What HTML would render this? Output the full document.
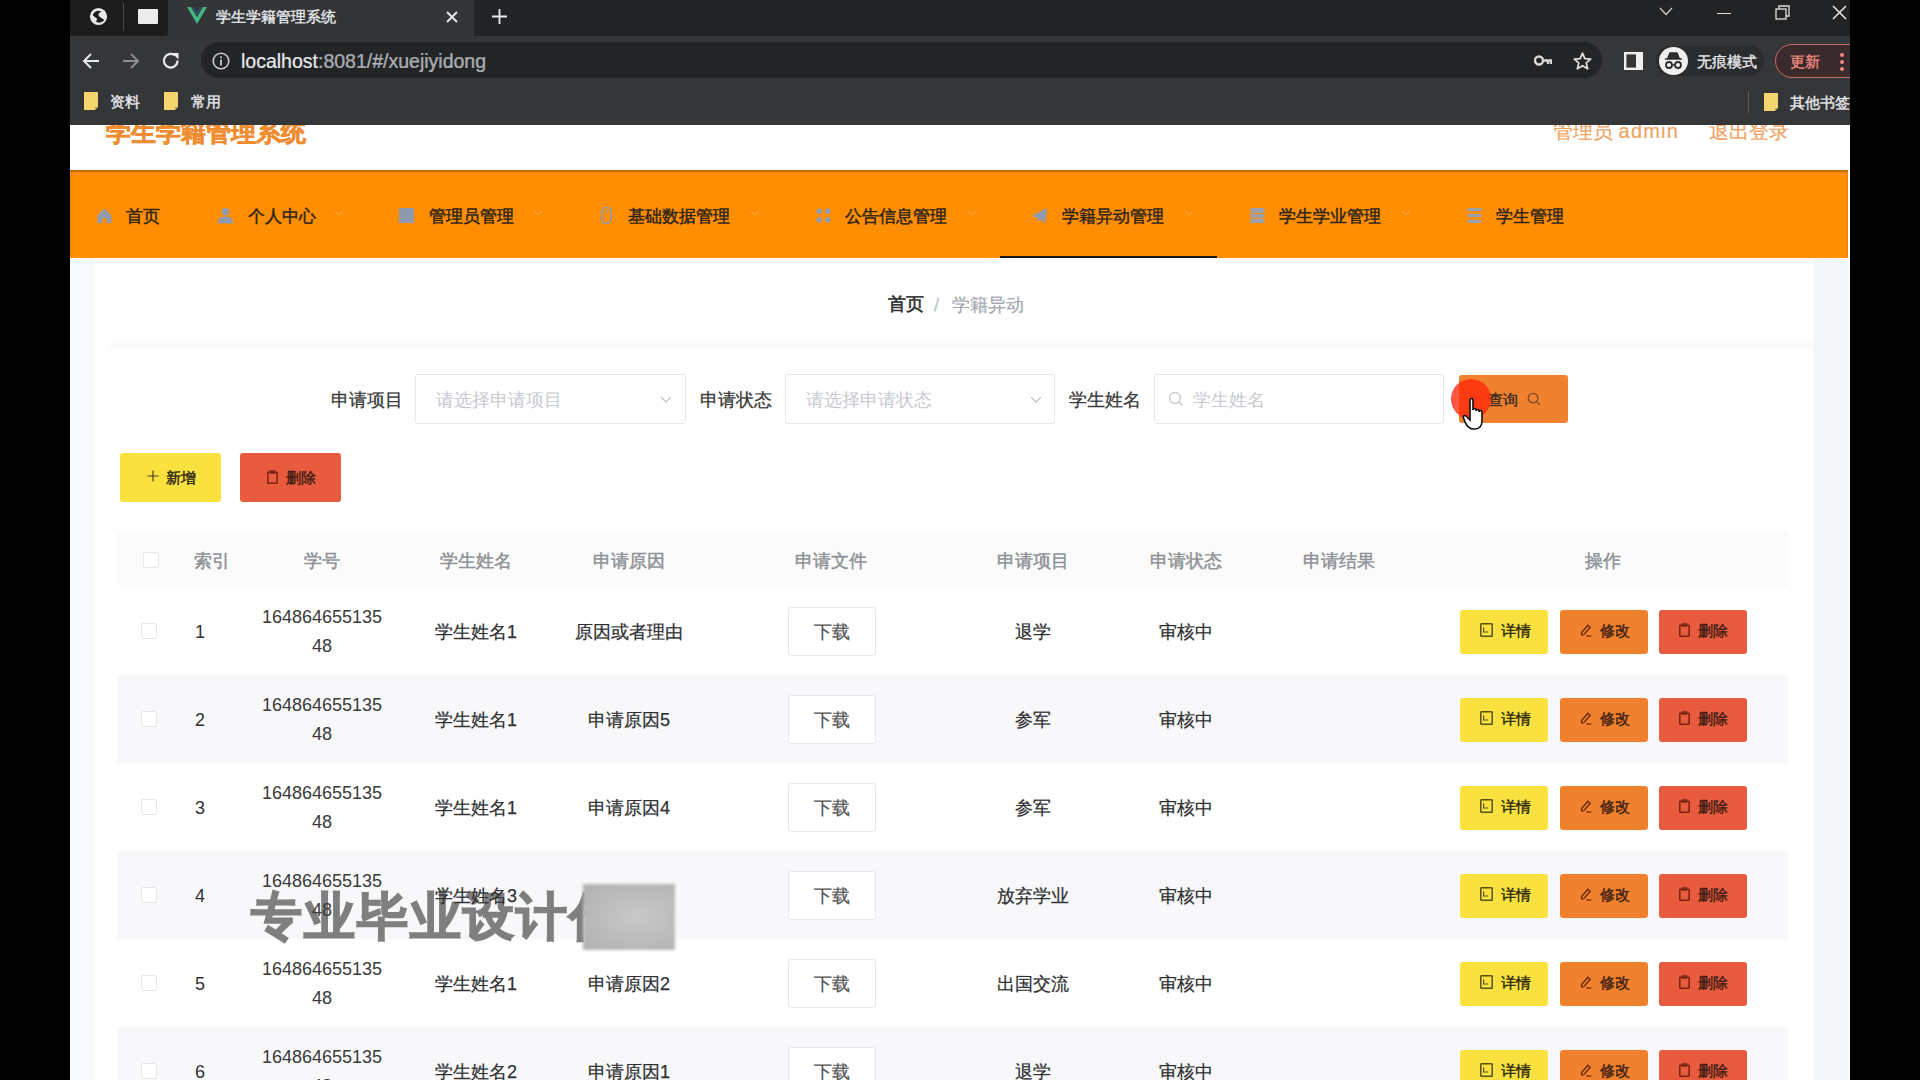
<!DOCTYPE html>
<html><head><meta charset="utf-8">
<style>
*{margin:0;padding:0;box-sizing:border-box}
html,body{width:1920px;height:1080px;overflow:hidden;background:#000;font-family:"Liberation Sans",sans-serif}
.a{position:absolute}
.t{position:absolute;white-space:nowrap;line-height:1}
.c{text-align:center}
.nav{font-size:17.45px;color:#2e2418;-webkit-text-stroke:0.45px #2e2418}
</style></head><body>
<!-- browser window -->
<div class="a" style="left:70px;top:0;width:1780px;height:36px;background:#222325"></div>
<div class="a" style="left:70px;top:36px;width:1780px;height:89px;background:#353638"></div>
<div class="a" style="left:70px;top:0;width:98px;height:35px;background:#1c1c1d;border-radius:0 0 6px 0"></div>
<svg class="a" style="left:89px;top:7px" width="19" height="19" viewBox="0 0 20 20"><circle cx="10" cy="10" r="9" fill="#e8e8e8"/><path d="M4 8 C6 4 10 3 13 5 C10 6 9 8 11 10 C13 12 15 12 16 14 C13 17 9 17 7 15 C9 14 9 12 7 11 C5 10 4 9 4 8Z" fill="#1c1c1d"/></svg>
<div class="a" style="left:123px;top:3px;width:1px;height:27px;background:#4a4a4a"></div>
<div class="a" style="left:138px;top:9px;width:20px;height:15px;background:#ececec;border-radius:1px"></div>
<div class="a" style="left:168px;top:0;width:306px;height:36px;background:#333537"></div>
<svg class="a" style="left:187px;top:7px" width="20" height="18" viewBox="0 0 20 18"><path d="M0 0 H4 L10 10 L16 0 H20 L10 17Z" fill="#41b883"/><path d="M4 0 H7.5 L10 4.5 L12.5 0 H16 L10 10Z" fill="#34495e"/></svg>
<div class="t" style="left:216px;top:9px;font-size:15px;color:#e8eaed;-webkit-text-stroke:0.35px #e8eaed">学生学籍管理系统</div>
<svg class="a" style="left:446px;top:11px" width="12" height="12" viewBox="0 0 12 12"><path d="M1 1L11 11M11 1L1 11" stroke="#e8eaed" stroke-width="1.8"/></svg>
<svg class="a" style="left:492px;top:9px" width="15" height="15" viewBox="0 0 15 15"><path d="M7.5 0V15M0 7.5H15" stroke="#e8eaed" stroke-width="1.8"/></svg>
<!-- window controls -->
<svg class="a" style="left:1659px;top:7px" width="14" height="9" viewBox="0 0 14 9"><path d="M1 1L7 7.5L13 1" fill="none" stroke="#cfcfcf" stroke-width="1.2"/></svg>
<div class="a" style="left:1717px;top:13px;width:14px;height:1px;background:#e0e0e0"></div>
<svg class="a" style="left:1775px;top:5px" width="15" height="15" viewBox="0 0 15 15"><rect x="1" y="4" width="10" height="10" fill="none" stroke="#e0e0e0" stroke-width="1.3"/><path d="M4 4V1H14V11H11" fill="none" stroke="#e0e0e0" stroke-width="1.3"/></svg>
<svg class="a" style="left:1832px;top:5px" width="15" height="15" viewBox="0 0 15 15"><path d="M1 1L14 14M14 1L1 14" stroke="#e8e8e8" stroke-width="1.5"/></svg>
<!-- toolbar -->
<svg class="a" style="left:81px;top:51px" width="20" height="20" viewBox="0 0 20 20"><path d="M18 10H3M10 3L3 10L10 17" fill="none" stroke="#e8eaed" stroke-width="2"/></svg>
<svg class="a" style="left:121px;top:51px" width="20" height="20" viewBox="0 0 20 20"><path d="M2 10H17M10 3L17 10L10 17" fill="none" stroke="#8a8c90" stroke-width="2"/></svg>
<svg class="a" style="left:161px;top:51px" width="20" height="20" viewBox="0 0 20 20"><path d="M16.5 9.5A6.8 6.8 0 1 1 14 4.5" fill="none" stroke="#e8eaed" stroke-width="2.2"/><path d="M11 2H17.5V8.5Z" fill="#e8eaed"/></svg>
<div class="a" style="left:201px;top:42px;width:1401px;height:36px;background:#232426;border-radius:18px"></div>
<svg class="a" style="left:212px;top:52px" width="18" height="18" viewBox="0 0 18 18"><circle cx="9" cy="9" r="7.8" fill="none" stroke="#c8cacd" stroke-width="1.6"/><rect x="8.1" y="7.5" width="1.8" height="6" fill="#c8cacd"/><rect x="8.1" y="4.3" width="1.8" height="1.9" fill="#c8cacd"/></svg>
<div class="t" style="left:241px;top:52px;font-size:19.5px;color:#e8eaed;-webkit-text-stroke:0.2px #e8eaed">localhost<span style="color:#a0a3a8">:8081/#/xuejiyidong</span></div>
<svg class="a" style="left:1534px;top:55px" width="18" height="11" viewBox="0 0 18 11"><circle cx="5" cy="5.5" r="4" fill="none" stroke="#d8d8d8" stroke-width="2.4"/><path d="M9 5.5H17V9M14 5.5V9" fill="none" stroke="#d8d8d8" stroke-width="2.4"/></svg>
<svg class="a" style="left:1573px;top:52px" width="19" height="18" viewBox="0 0 24 23"><path d="M12 1.5L15 8.5L22.5 9L16.8 14L18.6 21.5L12 17.5L5.4 21.5L7.2 14L1.5 9L9 8.5Z" fill="none" stroke="#e0e0e0" stroke-width="2.2" stroke-linejoin="round"/></svg>
<svg class="a" style="left:1624px;top:52px" width="19" height="18" viewBox="0 0 19 18"><rect x="1.2" y="1.2" width="16.6" height="15.6" fill="none" stroke="#f0f0f0" stroke-width="2.4"/><rect x="12" y="1" width="6" height="16" fill="#f0f0f0"/></svg>
<div class="a" style="left:1656px;top:46px;width:108px;height:30px;background:#2b2c2e;border-radius:15px"></div>
<div class="a" style="left:1659px;top:47px;width:29px;height:28px;background:#f0f0f0;border-radius:50%"></div>
<svg class="a" style="left:1663px;top:51px" width="21" height="20" viewBox="0 0 21 20"><path d="M2 8H19 M5 7L7 2H14L16 7Z" fill="#2b2c2e" stroke="#2b2c2e" stroke-width="1.5"/><circle cx="6" cy="14" r="3" fill="none" stroke="#2b2c2e" stroke-width="1.8"/><circle cx="15" cy="14" r="3" fill="none" stroke="#2b2c2e" stroke-width="1.8"/><path d="M9 14H12" stroke="#2b2c2e" stroke-width="1.5"/></svg>
<div class="t" style="left:1697px;top:54px;font-size:15px;color:#e8eaed;-webkit-text-stroke:0.35px #e8eaed">无痕模式</div>
<div class="a" style="left:1775px;top:44px;width:110px;height:34px;background:#3a2a2c;border:1.5px solid #c86a6a;border-radius:17px"></div>
<div class="t" style="left:1790px;top:54px;font-size:15px;color:#f28b82;-webkit-text-stroke:0.3px #f28b82">更新</div>
<div class="a" style="left:1840px;top:53px;width:4px;height:4px;background:#f28b82;border-radius:50%"></div>
<div class="a" style="left:1840px;top:60px;width:4px;height:4px;background:#f28b82;border-radius:50%"></div>
<div class="a" style="left:1840px;top:67px;width:4px;height:4px;background:#f28b82;border-radius:50%"></div>
<!-- bookmarks -->
<svg class="a" style="left:84px;top:92px" width="15" height="18" viewBox="0 0 15 18"><rect x="0" y="0" width="14" height="18" fill="#f5d66e"/><path d="M11 15H14V18H11Z" fill="#353638"/><path d="M11 15L14 15L11 18Z" fill="#c8b060"/></svg>
<div class="t" style="left:110px;top:94px;font-size:15px;color:#e8eaed;-webkit-text-stroke:0.35px #e8eaed">资料</div>
<svg class="a" style="left:164px;top:92px" width="15" height="18" viewBox="0 0 15 18"><rect x="0" y="0" width="14" height="18" fill="#f5d66e"/><path d="M11 15H14V18H11Z" fill="#353638"/><path d="M11 15L14 15L11 18Z" fill="#c8b060"/></svg>
<div class="t" style="left:191px;top:94px;font-size:15px;color:#e8eaed;-webkit-text-stroke:0.35px #e8eaed">常用</div>
<div class="a" style="left:1748px;top:91px;width:1px;height:22px;background:#5a5a5a"></div>
<svg class="a" style="left:1764px;top:93px" width="15" height="18" viewBox="0 0 15 18"><rect x="0" y="0" width="14" height="18" fill="#f5d66e"/><path d="M11 15H14V18H11Z" fill="#353638"/><path d="M11 15L14 15L11 18Z" fill="#c8b060"/></svg>
<div class="t" style="left:1790px;top:95px;font-size:15px;color:#e8eaed;-webkit-text-stroke:0.35px #e8eaed">其他书签</div>
<div class="a" style="left:1850px;top:0;width:70px;height:1080px;background:#000"></div>
<!-- page -->
<div class="a" style="left:70px;top:125px;width:1780px;height:955px;background:#f6f7f9;overflow:hidden" id="pg"><div class="a" style="left:-70px;top:-125px;width:1920px;height:1080px">
<div class="a" style="left:70px;top:125px;width:1780px;height:45px;background:#fff"></div>
<div class="t" style="left:106px;top:120px;font-size:25px;font-weight:bold;color:#f08c30;-webkit-text-stroke:0.5px #f08c30">学生学籍管理系统</div>
<div class="t" style="left:1553px;top:121px;font-size:20px;color:#efa262;-webkit-text-stroke:0.2px #efa262">管理员 <span style="letter-spacing:1.2px">admin</span></div>
<div class="t" style="left:1709px;top:121px;font-size:20px;color:#efa262;-webkit-text-stroke:0.2px #efa262">退出登录</div>
<!-- nav -->
<div class="a" style="left:70px;top:170px;width:1778px;height:88px;background:#ff8e02;box-shadow:inset 0 2px 2px rgba(120,60,0,.45)"></div>
<div class="a" style="left:1000px;top:256px;width:217px;height:2px;background:#1a1a1a"></div>
<svg class="a" style="left:96px;top:207px" width="17" height="17" viewBox="0 0 16 16"><path d="M8 1.5 L14.5 8 V15 H10 V10.5 H6 V15 H1.5 V8Z" fill="#8f9ab0"/></svg>
<div class="t nav" style="left:126px;top:208px">首页</div>
<svg class="a" style="left:217px;top:207px" width="17" height="17" viewBox="0 0 16 16"><circle cx="8" cy="4.5" r="3.5" fill="#8f9ab0"/><path d="M1 15.5 C1 10 4 9 8 9 C12 9 15 10 15 15.5Z" fill="#8f9ab0"/></svg>
<div class="t nav" style="left:248px;top:208px">个人中心</div>
<svg class="a" style="left:334px;top:210px" width="10" height="7" viewBox="0 0 10 7"><path d="M1 1 L5 5 L9 1" fill="none" stroke="#ffa23a" stroke-width="1.1"/></svg>
<svg class="a" style="left:398px;top:207px" width="17" height="17" viewBox="0 0 16 16"><rect x="1" y="1" width="14" height="14" rx="1" fill="#8f9ab0"/></svg>
<div class="t nav" style="left:429px;top:208px">管理员管理</div>
<svg class="a" style="left:533px;top:210px" width="10" height="7" viewBox="0 0 10 7"><path d="M1 1 L5 5 L9 1" fill="none" stroke="#ffa23a" stroke-width="1.1"/></svg>
<svg class="a" style="left:598px;top:207px" width="17" height="17" viewBox="0 0 16 16"><rect x="3.5" y="0.5" width="9" height="15" rx="4.5" fill="none" stroke="#8f9ab0" stroke-width="1.5"/><line x1="8" y1="3" x2="8" y2="6" stroke="#8f9ab0" stroke-width="1.5"/></svg>
<div class="t nav" style="left:628px;top:208px">基础数据管理</div>
<svg class="a" style="left:750px;top:210px" width="10" height="7" viewBox="0 0 10 7"><path d="M1 1 L5 5 L9 1" fill="none" stroke="#ffa23a" stroke-width="1.1"/></svg>
<svg class="a" style="left:815px;top:207px" width="17" height="17" viewBox="0 0 16 16"><circle cx="4" cy="4" r="2.6" fill="#8f9ab0"/><circle cx="12" cy="4" r="2.6" fill="#8f9ab0"/><circle cx="4" cy="12" r="2.6" fill="#8f9ab0"/><circle cx="12" cy="12" r="2.6" fill="#8f9ab0"/></svg>
<div class="t nav" style="left:845px;top:208px">公告信息管理</div>
<svg class="a" style="left:967px;top:210px" width="10" height="7" viewBox="0 0 10 7"><path d="M1 1 L5 5 L9 1" fill="none" stroke="#ffa23a" stroke-width="1.1"/></svg>
<svg class="a" style="left:1031px;top:207px" width="17" height="17" viewBox="0 0 16 16"><path d="M0.5 8.5 L15.5 1 L13 15.5 L8.5 11.5 L6 14 L6 10Z" fill="#8f9ab0"/></svg>
<div class="t nav" style="left:1062px;top:208px">学籍异动管理</div>
<svg class="a" style="left:1184px;top:210px" width="10" height="7" viewBox="0 0 10 7"><path d="M1 1 L5 5 L9 1" fill="none" stroke="#ffa23a" stroke-width="1.1"/></svg>
<svg class="a" style="left:1249px;top:207px" width="17" height="17" viewBox="0 0 16 16"><rect x="1.5" y="1" width="13" height="14" fill="#9b9fae"/><line x1="1.5" y1="6" x2="14.5" y2="6" stroke="#ff8e02" stroke-width="1"/><line x1="1.5" y1="10.5" x2="14.5" y2="10.5" stroke="#ff8e02" stroke-width="1"/></svg>
<div class="t nav" style="left:1279px;top:208px">学生学业管理</div>
<svg class="a" style="left:1401px;top:210px" width="10" height="7" viewBox="0 0 10 7"><path d="M1 1 L5 5 L9 1" fill="none" stroke="#ffa23a" stroke-width="1.1"/></svg>
<svg class="a" style="left:1466px;top:207px" width="17" height="17" viewBox="0 0 16 16"><rect x="1.5" y="1" width="13" height="3" fill="#9b9fae"/><rect x="1.5" y="6.5" width="13" height="3" fill="#9b9fae"/><rect x="1.5" y="12" width="13" height="3" fill="#9b9fae"/></svg>
<div class="t nav" style="left:1496px;top:208px">学生管理</div>

<!-- content card -->
<div class="a" style="left:70px;top:258px;width:24px;height:822px;background:#f6fafa"></div>
<div class="a" style="left:94px;top:258px;width:1719px;height:822px;background:#fff"></div>
<div class="a" style="left:94px;top:258px;width:1719px;height:4px;background:#fcfcfd"></div>
<div class="a" style="left:110px;top:340px;width:1703px;height:9px;background:linear-gradient(#fdfdfd,#f8f9fa 50%,#fdfdfd)"></div>
<!-- breadcrumb -->
<div class="t" style="left:888px;top:296px;font-size:17.5px;color:#303133;-webkit-text-stroke:0.6px #303133">首页</div>
<div class="t" style="left:934px;top:296px;font-size:18px;color:#c0c4cc;-webkit-text-stroke:0.3px #c0c4cc">/</div>
<div class="t" style="left:952px;top:296px;font-size:18px;color:#a4a7b0;-webkit-text-stroke:0.2px #a4a7b0">学籍异动</div>
<!-- form -->
<div class="t" style="left:331px;top:392px;font-size:17.5px;color:#3a3a3a;-webkit-text-stroke:0.3px #3a3a3a">申请项目</div>
<div class="a" style="left:415px;top:374px;width:271px;height:50px;border:1px solid #e4e7ed;border-radius:3px;background:#fff"></div>
<div class="t" style="left:436px;top:392px;font-size:17.5px;color:#c8cad0;">请选择申请项目</div>
<svg class="a" style="left:660px;top:396px;" width="12" height="8" viewBox="0 0 12 8"><path d="M1 1 L6 6 L11 1" fill="none" stroke="#c0c4cc" stroke-width="1.3"/></svg>
<div class="t" style="left:700px;top:392px;font-size:17.5px;color:#3a3a3a;-webkit-text-stroke:0.3px #3a3a3a">申请状态</div>
<div class="a" style="left:785px;top:374px;width:270px;height:50px;border:1px solid #e4e7ed;border-radius:3px;background:#fff"></div>
<div class="t" style="left:806px;top:392px;font-size:17.5px;color:#c8cad0;">请选择申请状态</div>
<svg class="a" style="left:1030px;top:396px;" width="12" height="8" viewBox="0 0 12 8"><path d="M1 1 L6 6 L11 1" fill="none" stroke="#c0c4cc" stroke-width="1.3"/></svg>
<div class="t" style="left:1069px;top:392px;font-size:17.5px;color:#3a3a3a;-webkit-text-stroke:0.3px #3a3a3a">学生姓名</div>
<div class="a" style="left:1154px;top:374px;width:290px;height:50px;border:1px solid #e4e7ed;border-radius:3px;background:#fff"></div>
<svg class="a" style="left:1168px;top:391px;" width="16" height="16" viewBox="0 0 16 16"><circle cx="7" cy="7" r="5.5" fill="none" stroke="#c8cad0" stroke-width="1.4"/><line x1="11" y1="11" x2="14.5" y2="14.5" stroke="#c8cad0" stroke-width="1.4"/></svg>
<div class="t" style="left:1193px;top:392px;font-size:17.5px;color:#c8cad0;">学生姓名</div>
<div class="a" style="left:1459px;top:375px;width:109px;height:48px;background:#f0812f;border-radius:3px"></div>
<div class="t" style="left:1488px;top:392px;font-size:15px;color:#3a2a20;-webkit-text-stroke:0.4px #3a2a20">查询</div>
<svg class="a" style="left:1527px;top:392px;" width="14" height="14" viewBox="0 0 16 16"><circle cx="7" cy="7" r="5.5" fill="none" stroke="#7a4a2a" stroke-width="1.5"/><line x1="11" y1="11" x2="14.5" y2="14.5" stroke="#7a4a2a" stroke-width="1.5"/></svg>
<div class="a" style="left:120px;top:453px;width:101px;height:49px;background:#f9e13f;border-radius:3px"></div>
<svg class="a" style="left:147px;top:470px;" width="12" height="12" viewBox="0 0 12 12"><path d="M6 0.5V11.5M0.5 6H11.5" stroke="#4a4020" stroke-width="1.2"/></svg>
<div class="t" style="left:166px;top:470px;font-size:15px;color:#2a2510;-webkit-text-stroke:0.4px #2a2510">新增</div>
<div class="a" style="left:240px;top:453px;width:101px;height:49px;background:#e95b3f;border-radius:3px"></div>
<svg class="a" style="left:267px;top:470px;" width="11" height="14" viewBox="0 0 11 14"><rect x="0.8" y="2.3" width="9.4" height="10.9" rx="0.5" fill="none" stroke="#7a2410" stroke-width="1.5"/><path d="M3.3 0.8H7.7V3.2H3.3Z" fill="none" stroke="#7a2410" stroke-width="1.3"/></svg>
<div class="t" style="left:286px;top:470px;font-size:15px;color:#3a1a10;-webkit-text-stroke:0.4px #3a1a10">删除</div>
<div class="a" style="left:117px;top:532px;width:1671px;height:55px;background:#fbfbfc"></div>
<div class="a" style="left:143px;top:552px;width:16px;height:16px;border:1px solid #e6e8ec;border-radius:2px;background:#fff"></div>
<div class="t c" style="left:62px;width:300px;top:553px;font-size:17.8px;color:#8e9196;-webkit-text-stroke:0.45px #8e9196">索引</div>
<div class="t c" style="left:172px;width:300px;top:553px;font-size:17.8px;color:#8e9196;-webkit-text-stroke:0.45px #8e9196">学号</div>
<div class="t c" style="left:326px;width:300px;top:553px;font-size:17.8px;color:#8e9196;-webkit-text-stroke:0.45px #8e9196">学生姓名</div>
<div class="t c" style="left:479px;width:300px;top:553px;font-size:17.8px;color:#8e9196;-webkit-text-stroke:0.45px #8e9196">申请原因</div>
<div class="t c" style="left:681px;width:300px;top:553px;font-size:17.8px;color:#8e9196;-webkit-text-stroke:0.45px #8e9196">申请文件</div>
<div class="t c" style="left:883px;width:300px;top:553px;font-size:17.8px;color:#8e9196;-webkit-text-stroke:0.45px #8e9196">申请项目</div>
<div class="t c" style="left:1036px;width:300px;top:553px;font-size:17.8px;color:#8e9196;-webkit-text-stroke:0.45px #8e9196">申请状态</div>
<div class="t c" style="left:1189px;width:300px;top:553px;font-size:17.8px;color:#8e9196;-webkit-text-stroke:0.45px #8e9196">申请结果</div>
<div class="t c" style="left:1453px;width:300px;top:553px;font-size:17.8px;color:#8e9196;-webkit-text-stroke:0.45px #8e9196">操作</div>
<div class="a" style="left:141px;top:623px;width:16px;height:16px;border:1px solid #e6e8ec;border-radius:2px;background:#fff"></div>
<div class="t c" style="left:50px;width:300px;top:623px;font-size:18px;color:#303133;">1</div>
<div class="t c" style="left:172px;width:300px;top:608px;font-size:18px;color:#3a3a3a;">164864655135</div>
<div class="t c" style="left:172px;width:300px;top:637px;font-size:18px;color:#3a3a3a;">48</div>
<div class="t c" style="left:326px;width:300px;top:623px;font-size:18px;color:#303133;-webkit-text-stroke:0.25px #303133">学生姓名1</div>
<div class="t c" style="left:479px;width:300px;top:623px;font-size:18px;color:#303133;-webkit-text-stroke:0.25px #303133">原因或者理由</div>
<div class="a" style="left:788px;top:607px;width:88px;height:49px;border:1px solid #e4e7ed;border-radius:3px;background:#fff"></div>
<div class="t c" style="left:682px;width:300px;top:623px;font-size:18px;color:#555;-webkit-text-stroke:0.2px #555">下载</div>
<div class="t c" style="left:883px;width:300px;top:623px;font-size:18px;color:#303133;-webkit-text-stroke:0.25px #303133">退学</div>
<div class="t c" style="left:1036px;width:300px;top:623px;font-size:18px;color:#303133;-webkit-text-stroke:0.25px #303133">审核中</div>
<div class="a" style="left:1460px;top:610px;width:88px;height:44px;background:#f9e13f;border-radius:3px"></div>
<svg class="a" style="left:1480px;top:623px;" width="13" height="14" viewBox="0 0 13 14"><rect x="0.8" y="0.8" width="11.4" height="12.4" rx="0.5" fill="none" stroke="#5a5018" stroke-width="1.5"/><path d="M3.6 4.5V9H8" fill="none" stroke="#5a5018" stroke-width="1.2"/></svg>
<div class="t" style="left:1501px;top:623px;font-size:15px;color:#2a2510;-webkit-text-stroke:0.4px #2a2510">详情</div>
<div class="a" style="left:1560px;top:610px;width:88px;height:44px;background:#f0812f;border-radius:3px"></div>
<svg class="a" style="left:1580px;top:624px;" width="12" height="13" viewBox="0 0 12 13"><path d="M2.2 11 C0.8 10 1.5 8.5 2.5 7.5 L8 1.2 L10.2 3.2 L4.8 9.5 C4 10.5 3.2 11.6 2.2 11Z" fill="none" stroke="#6a2a08" stroke-width="1.4"/><path d="M6.5 12H11.5" stroke="#6a2a08" stroke-width="1.3"/></svg>
<div class="t" style="left:1600px;top:623px;font-size:15px;color:#3a2010;-webkit-text-stroke:0.4px #3a2010">修改</div>
<div class="a" style="left:1659px;top:610px;width:88px;height:44px;background:#e95b3f;border-radius:3px"></div>
<svg class="a" style="left:1679px;top:623px;" width="11" height="14" viewBox="0 0 11 14"><rect x="0.8" y="2.3" width="9.4" height="10.9" rx="0.5" fill="none" stroke="#7a2410" stroke-width="1.5"/><path d="M3.3 0.8H7.7V3.2H3.3Z" fill="none" stroke="#7a2410" stroke-width="1.3"/></svg>
<div class="t" style="left:1698px;top:623px;font-size:15px;color:#3a1a10;-webkit-text-stroke:0.4px #3a1a10">删除</div>
<div class="a" style="left:117px;top:675px;width:1671px;height:88px;background:#f8f8fa"></div>
<div class="a" style="left:141px;top:711px;width:16px;height:16px;border:1px solid #e6e8ec;border-radius:2px;background:#fff"></div>
<div class="t c" style="left:50px;width:300px;top:711px;font-size:18px;color:#303133;">2</div>
<div class="t c" style="left:172px;width:300px;top:696px;font-size:18px;color:#3a3a3a;">164864655135</div>
<div class="t c" style="left:172px;width:300px;top:725px;font-size:18px;color:#3a3a3a;">48</div>
<div class="t c" style="left:326px;width:300px;top:711px;font-size:18px;color:#303133;-webkit-text-stroke:0.25px #303133">学生姓名1</div>
<div class="t c" style="left:479px;width:300px;top:711px;font-size:18px;color:#303133;-webkit-text-stroke:0.25px #303133">申请原因5</div>
<div class="a" style="left:788px;top:695px;width:88px;height:49px;border:1px solid #e4e7ed;border-radius:3px;background:#fff"></div>
<div class="t c" style="left:682px;width:300px;top:711px;font-size:18px;color:#555;-webkit-text-stroke:0.2px #555">下载</div>
<div class="t c" style="left:883px;width:300px;top:711px;font-size:18px;color:#303133;-webkit-text-stroke:0.25px #303133">参军</div>
<div class="t c" style="left:1036px;width:300px;top:711px;font-size:18px;color:#303133;-webkit-text-stroke:0.25px #303133">审核中</div>
<div class="a" style="left:1460px;top:698px;width:88px;height:44px;background:#f9e13f;border-radius:3px"></div>
<svg class="a" style="left:1480px;top:711px;" width="13" height="14" viewBox="0 0 13 14"><rect x="0.8" y="0.8" width="11.4" height="12.4" rx="0.5" fill="none" stroke="#5a5018" stroke-width="1.5"/><path d="M3.6 4.5V9H8" fill="none" stroke="#5a5018" stroke-width="1.2"/></svg>
<div class="t" style="left:1501px;top:711px;font-size:15px;color:#2a2510;-webkit-text-stroke:0.4px #2a2510">详情</div>
<div class="a" style="left:1560px;top:698px;width:88px;height:44px;background:#f0812f;border-radius:3px"></div>
<svg class="a" style="left:1580px;top:712px;" width="12" height="13" viewBox="0 0 12 13"><path d="M2.2 11 C0.8 10 1.5 8.5 2.5 7.5 L8 1.2 L10.2 3.2 L4.8 9.5 C4 10.5 3.2 11.6 2.2 11Z" fill="none" stroke="#6a2a08" stroke-width="1.4"/><path d="M6.5 12H11.5" stroke="#6a2a08" stroke-width="1.3"/></svg>
<div class="t" style="left:1600px;top:711px;font-size:15px;color:#3a2010;-webkit-text-stroke:0.4px #3a2010">修改</div>
<div class="a" style="left:1659px;top:698px;width:88px;height:44px;background:#e95b3f;border-radius:3px"></div>
<svg class="a" style="left:1679px;top:711px;" width="11" height="14" viewBox="0 0 11 14"><rect x="0.8" y="2.3" width="9.4" height="10.9" rx="0.5" fill="none" stroke="#7a2410" stroke-width="1.5"/><path d="M3.3 0.8H7.7V3.2H3.3Z" fill="none" stroke="#7a2410" stroke-width="1.3"/></svg>
<div class="t" style="left:1698px;top:711px;font-size:15px;color:#3a1a10;-webkit-text-stroke:0.4px #3a1a10">删除</div>
<div class="a" style="left:141px;top:799px;width:16px;height:16px;border:1px solid #e6e8ec;border-radius:2px;background:#fff"></div>
<div class="t c" style="left:50px;width:300px;top:799px;font-size:18px;color:#303133;">3</div>
<div class="t c" style="left:172px;width:300px;top:784px;font-size:18px;color:#3a3a3a;">164864655135</div>
<div class="t c" style="left:172px;width:300px;top:813px;font-size:18px;color:#3a3a3a;">48</div>
<div class="t c" style="left:326px;width:300px;top:799px;font-size:18px;color:#303133;-webkit-text-stroke:0.25px #303133">学生姓名1</div>
<div class="t c" style="left:479px;width:300px;top:799px;font-size:18px;color:#303133;-webkit-text-stroke:0.25px #303133">申请原因4</div>
<div class="a" style="left:788px;top:783px;width:88px;height:49px;border:1px solid #e4e7ed;border-radius:3px;background:#fff"></div>
<div class="t c" style="left:682px;width:300px;top:799px;font-size:18px;color:#555;-webkit-text-stroke:0.2px #555">下载</div>
<div class="t c" style="left:883px;width:300px;top:799px;font-size:18px;color:#303133;-webkit-text-stroke:0.25px #303133">参军</div>
<div class="t c" style="left:1036px;width:300px;top:799px;font-size:18px;color:#303133;-webkit-text-stroke:0.25px #303133">审核中</div>
<div class="a" style="left:1460px;top:786px;width:88px;height:44px;background:#f9e13f;border-radius:3px"></div>
<svg class="a" style="left:1480px;top:799px;" width="13" height="14" viewBox="0 0 13 14"><rect x="0.8" y="0.8" width="11.4" height="12.4" rx="0.5" fill="none" stroke="#5a5018" stroke-width="1.5"/><path d="M3.6 4.5V9H8" fill="none" stroke="#5a5018" stroke-width="1.2"/></svg>
<div class="t" style="left:1501px;top:799px;font-size:15px;color:#2a2510;-webkit-text-stroke:0.4px #2a2510">详情</div>
<div class="a" style="left:1560px;top:786px;width:88px;height:44px;background:#f0812f;border-radius:3px"></div>
<svg class="a" style="left:1580px;top:800px;" width="12" height="13" viewBox="0 0 12 13"><path d="M2.2 11 C0.8 10 1.5 8.5 2.5 7.5 L8 1.2 L10.2 3.2 L4.8 9.5 C4 10.5 3.2 11.6 2.2 11Z" fill="none" stroke="#6a2a08" stroke-width="1.4"/><path d="M6.5 12H11.5" stroke="#6a2a08" stroke-width="1.3"/></svg>
<div class="t" style="left:1600px;top:799px;font-size:15px;color:#3a2010;-webkit-text-stroke:0.4px #3a2010">修改</div>
<div class="a" style="left:1659px;top:786px;width:88px;height:44px;background:#e95b3f;border-radius:3px"></div>
<svg class="a" style="left:1679px;top:799px;" width="11" height="14" viewBox="0 0 11 14"><rect x="0.8" y="2.3" width="9.4" height="10.9" rx="0.5" fill="none" stroke="#7a2410" stroke-width="1.5"/><path d="M3.3 0.8H7.7V3.2H3.3Z" fill="none" stroke="#7a2410" stroke-width="1.3"/></svg>
<div class="t" style="left:1698px;top:799px;font-size:15px;color:#3a1a10;-webkit-text-stroke:0.4px #3a1a10">删除</div>
<div class="a" style="left:117px;top:851px;width:1671px;height:88px;background:#f8f8fa"></div>
<div class="t" style="left:251px;top:891px;font-size:51px;color:#7f7f7f;font-weight:bold;letter-spacing:2px;-webkit-text-stroke:1.5px #7f7f7f;text-shadow:0 0 1.5px #fff,0 0 1.5px #fff,0 0 1.5px #fff">专业毕业设计代</div>
<div class="a" style="left:141px;top:887px;width:16px;height:16px;border:1px solid #e6e8ec;border-radius:2px;background:#fff"></div>
<div class="t c" style="left:50px;width:300px;top:887px;font-size:18px;color:#303133;">4</div>
<div class="t c" style="left:172px;width:300px;top:872px;font-size:18px;color:#3a3a3a;">164864655135</div>
<div class="t c" style="left:172px;width:300px;top:901px;font-size:18px;color:#3a3a3a;">48</div>
<div class="t c" style="left:326px;width:300px;top:887px;font-size:18px;color:#303133;-webkit-text-stroke:0.25px #303133">学生姓名3</div>
<div class="t c" style="left:479px;width:300px;top:887px;font-size:18px;color:#303133;-webkit-text-stroke:0.25px #303133">申请原因3</div>
<div class="a" style="left:788px;top:871px;width:88px;height:49px;border:1px solid #e4e7ed;border-radius:3px;background:#fff"></div>
<div class="t c" style="left:682px;width:300px;top:887px;font-size:18px;color:#555;-webkit-text-stroke:0.2px #555">下载</div>
<div class="t c" style="left:883px;width:300px;top:887px;font-size:18px;color:#303133;-webkit-text-stroke:0.25px #303133">放弃学业</div>
<div class="t c" style="left:1036px;width:300px;top:887px;font-size:18px;color:#303133;-webkit-text-stroke:0.25px #303133">审核中</div>
<div class="a" style="left:1460px;top:874px;width:88px;height:44px;background:#f9e13f;border-radius:3px"></div>
<svg class="a" style="left:1480px;top:887px;" width="13" height="14" viewBox="0 0 13 14"><rect x="0.8" y="0.8" width="11.4" height="12.4" rx="0.5" fill="none" stroke="#5a5018" stroke-width="1.5"/><path d="M3.6 4.5V9H8" fill="none" stroke="#5a5018" stroke-width="1.2"/></svg>
<div class="t" style="left:1501px;top:887px;font-size:15px;color:#2a2510;-webkit-text-stroke:0.4px #2a2510">详情</div>
<div class="a" style="left:1560px;top:874px;width:88px;height:44px;background:#f0812f;border-radius:3px"></div>
<svg class="a" style="left:1580px;top:888px;" width="12" height="13" viewBox="0 0 12 13"><path d="M2.2 11 C0.8 10 1.5 8.5 2.5 7.5 L8 1.2 L10.2 3.2 L4.8 9.5 C4 10.5 3.2 11.6 2.2 11Z" fill="none" stroke="#6a2a08" stroke-width="1.4"/><path d="M6.5 12H11.5" stroke="#6a2a08" stroke-width="1.3"/></svg>
<div class="t" style="left:1600px;top:887px;font-size:15px;color:#3a2010;-webkit-text-stroke:0.4px #3a2010">修改</div>
<div class="a" style="left:1659px;top:874px;width:88px;height:44px;background:#e95b3f;border-radius:3px"></div>
<svg class="a" style="left:1679px;top:887px;" width="11" height="14" viewBox="0 0 11 14"><rect x="0.8" y="2.3" width="9.4" height="10.9" rx="0.5" fill="none" stroke="#7a2410" stroke-width="1.5"/><path d="M3.3 0.8H7.7V3.2H3.3Z" fill="none" stroke="#7a2410" stroke-width="1.3"/></svg>
<div class="t" style="left:1698px;top:887px;font-size:15px;color:#3a1a10;-webkit-text-stroke:0.4px #3a1a10">删除</div>
<div class="a" style="left:141px;top:975px;width:16px;height:16px;border:1px solid #e6e8ec;border-radius:2px;background:#fff"></div>
<div class="t c" style="left:50px;width:300px;top:975px;font-size:18px;color:#303133;">5</div>
<div class="t c" style="left:172px;width:300px;top:960px;font-size:18px;color:#3a3a3a;">164864655135</div>
<div class="t c" style="left:172px;width:300px;top:989px;font-size:18px;color:#3a3a3a;">48</div>
<div class="t c" style="left:326px;width:300px;top:975px;font-size:18px;color:#303133;-webkit-text-stroke:0.25px #303133">学生姓名1</div>
<div class="t c" style="left:479px;width:300px;top:975px;font-size:18px;color:#303133;-webkit-text-stroke:0.25px #303133">申请原因2</div>
<div class="a" style="left:788px;top:959px;width:88px;height:49px;border:1px solid #e4e7ed;border-radius:3px;background:#fff"></div>
<div class="t c" style="left:682px;width:300px;top:975px;font-size:18px;color:#555;-webkit-text-stroke:0.2px #555">下载</div>
<div class="t c" style="left:883px;width:300px;top:975px;font-size:18px;color:#303133;-webkit-text-stroke:0.25px #303133">出国交流</div>
<div class="t c" style="left:1036px;width:300px;top:975px;font-size:18px;color:#303133;-webkit-text-stroke:0.25px #303133">审核中</div>
<div class="a" style="left:1460px;top:962px;width:88px;height:44px;background:#f9e13f;border-radius:3px"></div>
<svg class="a" style="left:1480px;top:975px;" width="13" height="14" viewBox="0 0 13 14"><rect x="0.8" y="0.8" width="11.4" height="12.4" rx="0.5" fill="none" stroke="#5a5018" stroke-width="1.5"/><path d="M3.6 4.5V9H8" fill="none" stroke="#5a5018" stroke-width="1.2"/></svg>
<div class="t" style="left:1501px;top:975px;font-size:15px;color:#2a2510;-webkit-text-stroke:0.4px #2a2510">详情</div>
<div class="a" style="left:1560px;top:962px;width:88px;height:44px;background:#f0812f;border-radius:3px"></div>
<svg class="a" style="left:1580px;top:976px;" width="12" height="13" viewBox="0 0 12 13"><path d="M2.2 11 C0.8 10 1.5 8.5 2.5 7.5 L8 1.2 L10.2 3.2 L4.8 9.5 C4 10.5 3.2 11.6 2.2 11Z" fill="none" stroke="#6a2a08" stroke-width="1.4"/><path d="M6.5 12H11.5" stroke="#6a2a08" stroke-width="1.3"/></svg>
<div class="t" style="left:1600px;top:975px;font-size:15px;color:#3a2010;-webkit-text-stroke:0.4px #3a2010">修改</div>
<div class="a" style="left:1659px;top:962px;width:88px;height:44px;background:#e95b3f;border-radius:3px"></div>
<svg class="a" style="left:1679px;top:975px;" width="11" height="14" viewBox="0 0 11 14"><rect x="0.8" y="2.3" width="9.4" height="10.9" rx="0.5" fill="none" stroke="#7a2410" stroke-width="1.5"/><path d="M3.3 0.8H7.7V3.2H3.3Z" fill="none" stroke="#7a2410" stroke-width="1.3"/></svg>
<div class="t" style="left:1698px;top:975px;font-size:15px;color:#3a1a10;-webkit-text-stroke:0.4px #3a1a10">删除</div>
<div class="a" style="left:117px;top:1027px;width:1671px;height:88px;background:#f8f8fa"></div>
<div class="a" style="left:141px;top:1063px;width:16px;height:16px;border:1px solid #e6e8ec;border-radius:2px;background:#fff"></div>
<div class="t c" style="left:50px;width:300px;top:1063px;font-size:18px;color:#303133;">6</div>
<div class="t c" style="left:172px;width:300px;top:1048px;font-size:18px;color:#3a3a3a;">164864655135</div>
<div class="t c" style="left:172px;width:300px;top:1077px;font-size:18px;color:#3a3a3a;">48</div>
<div class="t c" style="left:326px;width:300px;top:1063px;font-size:18px;color:#303133;-webkit-text-stroke:0.25px #303133">学生姓名2</div>
<div class="t c" style="left:479px;width:300px;top:1063px;font-size:18px;color:#303133;-webkit-text-stroke:0.25px #303133">申请原因1</div>
<div class="a" style="left:788px;top:1047px;width:88px;height:49px;border:1px solid #e4e7ed;border-radius:3px;background:#fff"></div>
<div class="t c" style="left:682px;width:300px;top:1063px;font-size:18px;color:#555;-webkit-text-stroke:0.2px #555">下载</div>
<div class="t c" style="left:883px;width:300px;top:1063px;font-size:18px;color:#303133;-webkit-text-stroke:0.25px #303133">退学</div>
<div class="t c" style="left:1036px;width:300px;top:1063px;font-size:18px;color:#303133;-webkit-text-stroke:0.25px #303133">审核中</div>
<div class="a" style="left:1460px;top:1050px;width:88px;height:44px;background:#f9e13f;border-radius:3px"></div>
<svg class="a" style="left:1480px;top:1063px;" width="13" height="14" viewBox="0 0 13 14"><rect x="0.8" y="0.8" width="11.4" height="12.4" rx="0.5" fill="none" stroke="#5a5018" stroke-width="1.5"/><path d="M3.6 4.5V9H8" fill="none" stroke="#5a5018" stroke-width="1.2"/></svg>
<div class="t" style="left:1501px;top:1063px;font-size:15px;color:#2a2510;-webkit-text-stroke:0.4px #2a2510">详情</div>
<div class="a" style="left:1560px;top:1050px;width:88px;height:44px;background:#f0812f;border-radius:3px"></div>
<svg class="a" style="left:1580px;top:1064px;" width="12" height="13" viewBox="0 0 12 13"><path d="M2.2 11 C0.8 10 1.5 8.5 2.5 7.5 L8 1.2 L10.2 3.2 L4.8 9.5 C4 10.5 3.2 11.6 2.2 11Z" fill="none" stroke="#6a2a08" stroke-width="1.4"/><path d="M6.5 12H11.5" stroke="#6a2a08" stroke-width="1.3"/></svg>
<div class="t" style="left:1600px;top:1063px;font-size:15px;color:#3a2010;-webkit-text-stroke:0.4px #3a2010">修改</div>
<div class="a" style="left:1659px;top:1050px;width:88px;height:44px;background:#e95b3f;border-radius:3px"></div>
<svg class="a" style="left:1679px;top:1063px;" width="11" height="14" viewBox="0 0 11 14"><rect x="0.8" y="2.3" width="9.4" height="10.9" rx="0.5" fill="none" stroke="#7a2410" stroke-width="1.5"/><path d="M3.3 0.8H7.7V3.2H3.3Z" fill="none" stroke="#7a2410" stroke-width="1.3"/></svg>
<div class="t" style="left:1698px;top:1063px;font-size:15px;color:#3a1a10;-webkit-text-stroke:0.4px #3a1a10">删除</div>
<div class="a" style="left:583px;top:884px;width:92px;height:66px;background:radial-gradient(ellipse at 60% 50%,#c8c8c8,#b0b0b0);filter:blur(1.5px)"></div>
<div class="a" style="left:1451px;top:379px;width:40px;height:40px;border-radius:50%;background:rgba(255,40,10,0.78)"></div>
<svg class="a" style="left:1462px;top:397px;" width="28" height="34" viewBox="0 0 28 34"><path d="M8 3 C8 1 11 1 11 3 V13 C11 11 14 11 14 13 V14 C14 12 17 12 17 14 V15 C17 13 20 13 20 15 V24 C20 29 17 32 13 32 H11 C8 32 6 30 4 27 L1.5 21 C0.5 19 3 17.5 4.5 19.5 L8 23Z" fill="#fff" stroke="#111" stroke-width="1.6"/></svg>
</div></div>
</body></html>
